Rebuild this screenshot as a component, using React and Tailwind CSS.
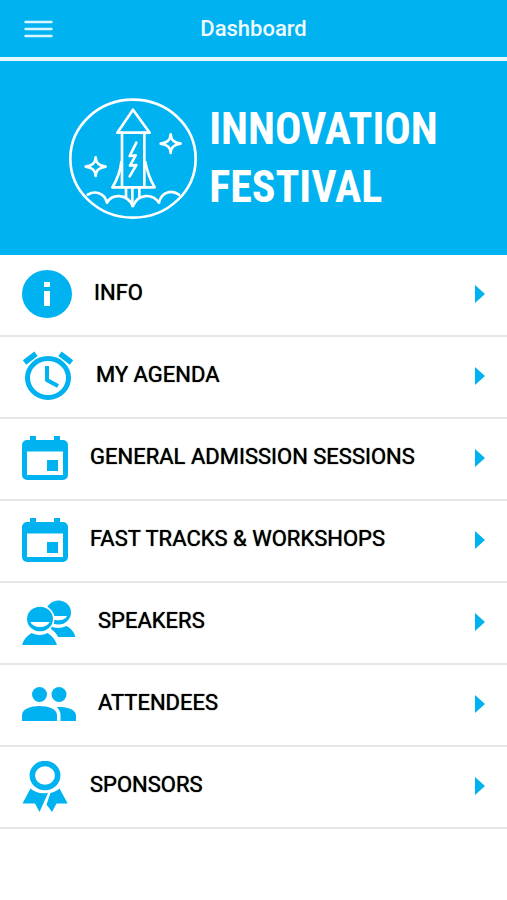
function InfoIcon() {
  return (
    <svg width="50" height="48" viewBox="0 0 50 48" aria-hidden="true">
      <ellipse cx="25" cy="24" rx="25" ry="24" fill="#00b2f0" />
      <rect x="22" y="12" width="6" height="5" fill="#fff" />
      <rect x="22" y="21" width="6" height="15" fill="#fff" />
    </svg>
  );
}

function AlarmIcon() {
  return (
    <svg width="52" height="50" viewBox="0 0 52 50" fill="none" stroke="#00b2f0" aria-hidden="true">
      <ellipse cx="26" cy="27" rx="20.5" ry="19.5" strokeWidth="5" />
      <path d="M2.500 11.500 14 2.800M49.500 11.500 38 2.800" strokeWidth="5.500" />
      <path d="M25 15v14l11 6" strokeWidth="4" />
    </svg>
  );
}

function CalendarIcon() {
  return (
    <svg width="46" height="44" viewBox="0 0 46 44" fill="#00b2f0" aria-hidden="true">
      <path d="M8 0h6v4h18V0h6v4h3a5 5 0 0 1 5 5v30a5 5 0 0 1-5 5H5a5 5 0 0 1-5-5V9a5 5 0 0 1 5-5h3z" />
      <rect x="5" y="15.500" width="36" height="23.500" fill="#fff" />
      <rect x="25" y="24" width="11" height="11" />
    </svg>
  );
}

function SpeakersIcon() {
  return (
    <svg width="54" height="45" viewBox="0 0 54 45" fill="#00b2f0" aria-hidden="true">
      <ellipse cx="36.500" cy="12.500" rx="12.500" ry="12" />
      <path d="M28 16h17c-1.500 3-4.500 4.300-8.500 4.300S29 19 28 16z" fill="#fff" />
      <path d="M29 26c3 2.500 11 2.500 15 0 5 2 8 6 9.500 11H36c-1-3-4-6-7-8z" />
      <ellipse cx="18" cy="19" rx="14.500" ry="14" fill="#fff" />
      <ellipse cx="18" cy="19" rx="13" ry="12.300" />
      <path d="M8.500 22h19c-1.500 3.500-5 5-9.500 5s-8-1.500-9.500-5z" fill="#fff" />
      <path d="M0 45c1.500-5 4.500-9 9.500-12 4.500 2.500 12 2.500 16 0 5 3 8 7 9.500 12z" />
    </svg>
  );
}

function AttendeesIcon() {
  return (
    <svg width="54" height="34" viewBox="0 0 54 34" fill="#00b2f0" aria-hidden="true">
      <circle cx="17.500" cy="7.500" r="7.500" />
      <circle cx="37" cy="7.500" r="7.500" />
      <path d="M0 34v-6c0-6 9-9 17.500-9S35 22 35 28v6z" />
      <path d="M38.500 34v-6c0-3-1.500-5.500-3.500-8 9-.5 19 2 19 8.500V34z" />
    </svg>
  );
}

function RibbonIcon() {
  return (
    <svg width="46" height="51" viewBox="0 0 46 51" fill="#00b2f0" aria-hidden="true">
      <ellipse cx="23" cy="14.500" rx="12.700" ry="12" fill="none" stroke="#00b2f0" strokeWidth="5.500" />
      <path d="M8.500 27.500c4.500 4 10 5.500 17.500 4.500L17.500 51 13 42.500H.5z" />
      <path d="M37.500 27.500l8.200 15H34.500L30 51l-5.500-7.500L28.500 32c3.500-.8 6.500-2.200 9-4.500z" />
    </svg>
  );
}

function RocketLogo() {
  return (
    <svg width="128" height="121" viewBox="28 22 384 363" fill="none" stroke="#fff" strokeWidth="8" strokeLinejoin="round" strokeLinecap="round" aria-hidden="true">
      <ellipse cx="220" cy="204" rx="188" ry="177" />
      <path d="M220 57 173 126h97z" />
      <path d="M187 126v163M254 126v163" />
      <path d="M185 214c-3 28-12 52-27 76h127c-14-24-23-48-28-76" />
      <path d="M230 156l-20 40 18-2-17 31 19-2-20 34" />
      <path d="M199 292v26M218 292v54M239 292v26" />
      <path d="M84 312c20-12 50-8 58 24 14-26 58-30 78 10 16-38 58-38 78-10 8-36 40-38 60-24" />
      <path d="M333 131c1 17 9 25 30 28-21 3-29 11-30 28-1-17-9-25-30-28 21-3 29-11 30-28z" />
      <path d="M108 200c1 17 9 25 30 28-21 3-29 11-30 28-1-17-9-25-30-28 21-3 29-11 30-28z" />
    </svg>
  );
}

const items = [
  { label: 'INFO', Icon: InfoIcon },
  { label: 'MY AGENDA', Icon: AlarmIcon },
  { label: 'GENERAL ADMISSION SESSIONS', Icon: CalendarIcon },
  { label: 'FAST TRACKS & WORKSHOPS', Icon: CalendarIcon },
  { label: 'SPEAKERS', Icon: SpeakersIcon },
  { label: 'ATTENDEES', Icon: AttendeesIcon },
  { label: 'SPONSORS', Icon: RibbonIcon },
];

export default function App() {
  return (
    <div className="min-h-screen bg-white font-[Roboto,sans-serif]">
      <header className="grid h-[61px] grid-cols-[1fr_auto_1fr] items-center border-b-4 border-[#e6f8ff] bg-[#00b2f0] px-6">
        <button type="button" aria-label="Menu" className="justify-self-start">
          <svg width="29" height="18" viewBox="0 0 29 18" stroke="#d9f5ff" strokeWidth="2.400" strokeLinecap="round">
            <path d="M1.500 2h26M1.500 9h26M1.500 16h26" />
          </svg>
        </button>
        <h1 className="text-[22px] font-medium text-[#f0fbff]">Dashboard</h1>
      </header>
      <div className="flex h-[194px] items-center justify-center gap-3 bg-[#00b2f0]">
        <RocketLogo />
        <p className="font-['Liberation_Sans_Narrow','Roboto_Condensed',sans-serif] text-[44px] leading-[58px] font-bold text-white">
          INNOVATION
          <br />
          FESTIVAL
        </p>
      </div>
      <nav>
        <ul>
          {items.map(({ label, Icon }) => (
            <li key={label}>
              <a href="#" className="flex h-[82px] items-center gap-[22px] border-b-2 border-[#e6e6e6] px-[22px] pb-[2px]">
                <Icon />
                <span className="flex-1 pb-1 text-[22px] text-black [text-shadow:0_0_1px_#000]">{label}</span>
                <svg width="10" height="18" viewBox="0 0 10 18" fill="#00b2f0" aria-hidden="true">
                  <path d="M0 0l10 9-10 9z" />
                </svg>
              </a>
            </li>
          ))}
        </ul>
      </nav>
    </div>
  );
}
